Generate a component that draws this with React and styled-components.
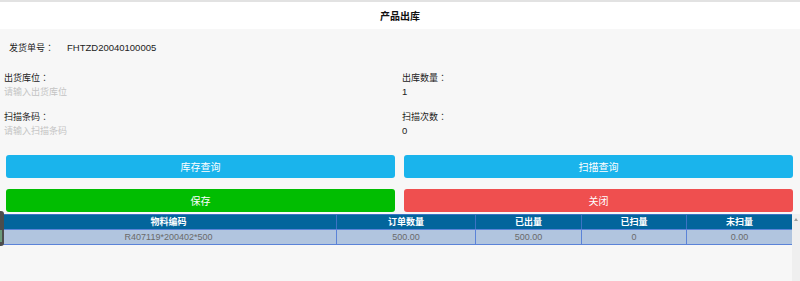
import React from "react";
import styled, { createGlobalStyle } from "styled-components";

const Global = createGlobalStyle`
  html, body { margin: 0; padding: 0; }
  body {
    font-family: "Liberation Sans", Arial, "Noto Sans CJK SC", sans-serif;
    background: #f7f7f7;
  }
`;

const Page = styled.div`
  position: relative;
  width: 800px;
  height: 281px;
  display: flex;
  flex-direction: column;
  background: #f7f7f7;
  overflow: hidden;
  font-size: 9px;
  color: #333;
`;

const TopLine = styled.div`
  height: 2px;
  background: #e2e2e2;
`;

const Header = styled.div`
  height: 27px;
  background: #fff;
  display: flex;
  align-items: center;
  justify-content: center;
  font-size: 10px;
  font-weight: bold;
  color: #111;
`;

const OrderRow = styled.div`
  display: flex;
  align-items: baseline;
  margin-top: 12px;
  padding-left: 9px;
  line-height: 14px;
  color: #222;
`;

const OrderLabel = styled.span`
  width: 58px;
`;

const OrderValue = styled.span`
  font-size: 9.5px;
`;

const Colon = styled.span`
  font-family: "Noto Sans CJK TC", sans-serif;
`;

const Fields = styled.div`
  display: grid;
  grid-template-columns: 398px 1fr;
  row-gap: 11px;
  margin-top: 16px;
  padding-left: 4px;
`;

const Field = styled.div`
  display: flex;
  flex-direction: column;
  line-height: 14px;
`;

const Label = styled.div`
  color: #222;
`;

const Value = styled.div`
  color: ${(p) => (p.$placeholder ? "#c4c4c4" : "#222")};
  font-size: ${(p) => (p.$placeholder ? "9px" : "9.5px")};
`;

const Buttons = styled.div`
  display: grid;
  grid-template-columns: 1fr 1fr;
  column-gap: 9px;
  row-gap: 11px;
  margin-top: 17px;
  padding: 0 7px 0 6px;
`;

const Button = styled.div`
  height: 23px;
  border-radius: 3px;
  background: ${(p) => p.$bg};
  color: #fff;
  font-size: 10px;
  display: flex;
  align-items: center;
  justify-content: center;
`;

const TableArea = styled.div`
  flex: 1;
  display: flex;
  margin-top: 2px;
`;

const TableBox = styled.div`
  width: 792px;
`;

const Table = styled.table`
  width: 792px;
  border-collapse: collapse;
  table-layout: fixed;
  font-size: 9px;
`;

const Th = styled.th`
  background: #03659c;
  color: #fff;
  font-weight: bold;
  height: 14px;
  padding: 0;
  line-height: 14px;
  border: 1px solid #3d73c4;
  border-bottom-color: #5b83d8;
`;

const Td = styled.td`
  background: #b1c5df;
  color: #6a6a6a;
  text-align: center;
  height: 14px;
  padding: 0;
  line-height: 14px;
  border: 1px solid #5b83d8;
`;

const ScrollBar = styled.div`
  width: 8px;
  background: #efefef;
  display: flex;
  justify-content: center;
  padding-top: 4px;
`;

const Arrow = styled.div`
  width: 0;
  height: 0;
  border-left: 2px solid transparent;
  border-right: 2px solid transparent;
  border-bottom: 3px solid #a0a0a0;
`;

const SideTab = styled.div`
  position: absolute;
  left: 0;
  top: 211px;
  width: 4px;
  height: 35px;
  background: #4d4d4d;
  border-radius: 0 3px 3px 0;
  display: flex;
  align-items: flex-end;
  padding-bottom: 4px;
  box-sizing: border-box;
`;

const SideTabInner = styled.div`
  width: 2px;
  height: 12px;
  background: #6a9a7a;
`;

const cols = [
  { name: "物料编码", w: 336 },
  { name: "订单数量", w: 139 },
  { name: "已出量", w: 106 },
  { name: "已扫量", w: 105 },
  { name: "未扫量", w: 106 },
];

const row = ["R407119*200402*500", "500.00", "500.00", "0", "0.00"];

export default function App() {
  return (
    <Page>
      <Global />
      <TopLine />
      <Header>产品出库</Header>
      <OrderRow>
        <OrderLabel>
          发货单号<Colon>：</Colon>
        </OrderLabel>
        <OrderValue>FHTZD20040100005</OrderValue>
      </OrderRow>
      <Fields>
        <Field>
          <Label>
            出货库位<Colon>：</Colon>
          </Label>
          <Value $placeholder>请输入出货库位</Value>
        </Field>
        <Field>
          <Label>
            出库数量<Colon>：</Colon>
          </Label>
          <Value>1</Value>
        </Field>
        <Field>
          <Label>
            扫描条码<Colon>：</Colon>
          </Label>
          <Value $placeholder>请输入扫描条码</Value>
        </Field>
        <Field>
          <Label>
            扫描次数<Colon>：</Colon>
          </Label>
          <Value>0</Value>
        </Field>
      </Fields>
      <Buttons>
        <Button $bg="#1ab4ec">库存查询</Button>
        <Button $bg="#1ab4ec">扫描查询</Button>
        <Button $bg="#01bd01">保存</Button>
        <Button $bg="#ef4f4f">关闭</Button>
      </Buttons>
      <TableArea>
        <TableBox>
          <Table>
            <colgroup>
              {cols.map((c) => (
                <col key={c.name} style={{ width: c.w }} />
              ))}
            </colgroup>
            <thead>
              <tr>
                {cols.map((c) => (
                  <Th key={c.name}>{c.name}</Th>
                ))}
              </tr>
            </thead>
            <tbody>
              <tr>
                {row.map((v, i) => (
                  <Td key={i}>{v}</Td>
                ))}
              </tr>
            </tbody>
          </Table>
        </TableBox>
        <ScrollBar>
          <Arrow />
        </ScrollBar>
      </TableArea>
      <SideTab>
        <SideTabInner />
      </SideTab>
    </Page>
  );
}
